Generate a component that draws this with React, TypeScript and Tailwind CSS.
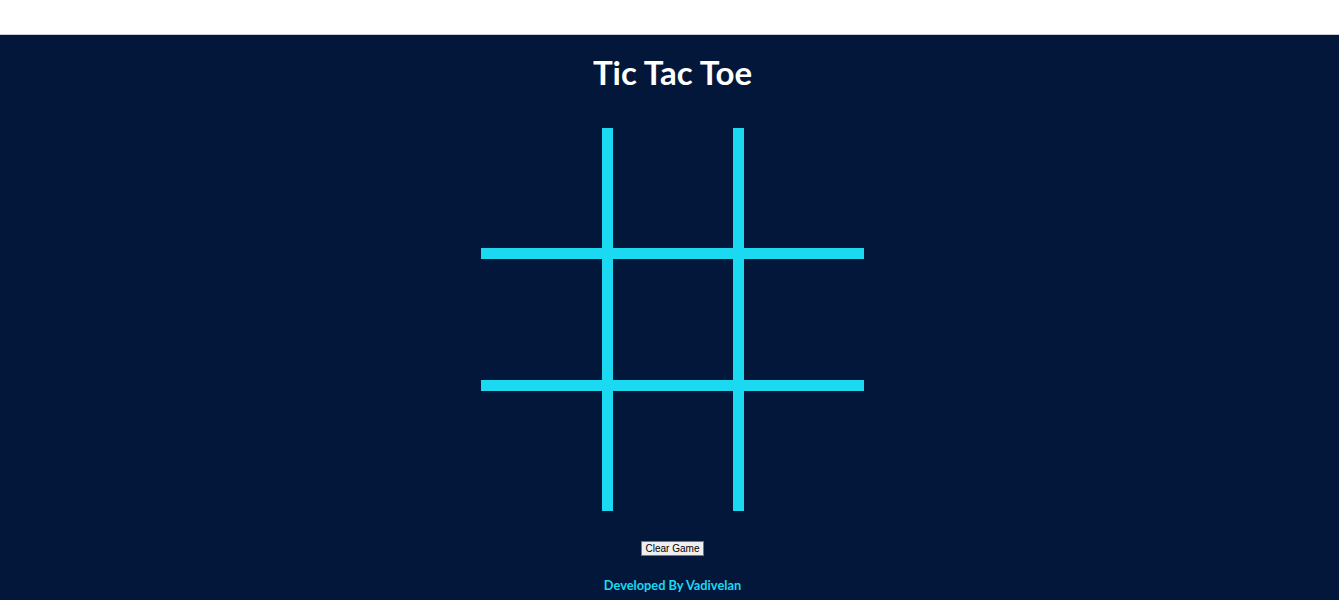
const cells = Array.from({ length: 9 }, (_, i) => i)

export default function App() {
  return (
    <div className="min-h-[600px] bg-white" style={{ fontFamily: 'Lato, sans-serif' }}>
      <div className="h-[35px] border-b border-[#c9ccd4] bg-white" />
      <main className="flex flex-col items-center bg-[#02173a] pb-[9px] pl-[6px]">
        <h1 className="mt-[15px] text-[33px] font-bold leading-[44px] text-white">
          Tic Tac Toe
        </h1>
        <div className="mt-[34px] grid grid-cols-[121px_120px_120px] grid-rows-[120px_121px_120px] gap-[11px] bg-[#1ad9f0]">
          {cells.map((c) => (
            <div key={c} className="bg-[#02173a]" />
          ))}
        </div>
        <button
          className="mt-[30px] h-[15px] border border-[#767676] bg-[#efefef] px-[4px] text-[10px] leading-[12px] text-black"
          style={{ fontFamily: '"Liberation Sans", Arial, sans-serif' }}
        >
          Clear Game
        </button>
        <p className="mt-[21px] text-[12.8px] font-bold leading-[16px] text-[#1ad9f0]">
          Developed By Vadivelan
        </p>
      </main>
    </div>
  )
}
